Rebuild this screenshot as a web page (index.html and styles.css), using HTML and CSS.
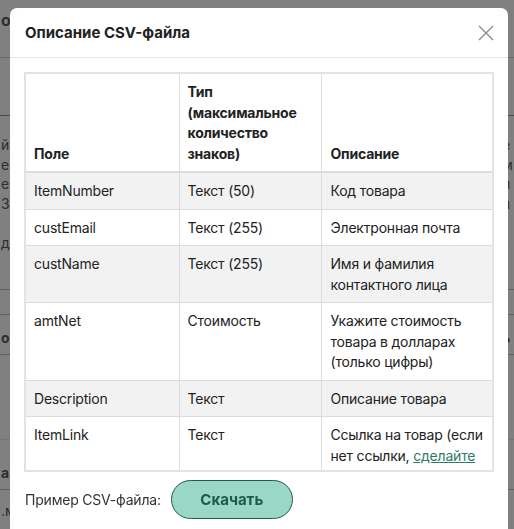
FILE: index.html
```html
<!DOCTYPE html>
<html lang="ru">
<head>
    <meta charset="UTF-8">
    <meta name="viewport" content="width=device-width, initial-scale=1.0">
    <title>Описание CSV-файла</title>
    <link rel="stylesheet" href="styles.css">
</head>
<body>

    <div class="page">
        <div class="page-row r0"><span class="b big">о:</span><span></span></div>
        <div class="page-row r1"><span></span><span></span></div>
        <div class="page-row r2">
            <span>й<br>е<br>ер<br>3)<br><br>да</span>
            <span>е<br>м<br>п<br>л<br><br>г</span>
        </div>
        <div class="page-row r3"><span></span><span></span></div>
        <div class="page-row r4"><span class="b">ор</span><span class="b">ь</span></div>
        <div class="page-row r5"><span></span><span></span></div>
        <div class="page-row r6"><span class="b">а</span><span></span></div>
        <div class="page-row r7"><span>.м</span><span></span></div>
    </div>

    <div class="modal">
        <div class="modal-header">
            <h5 class="modal-title">Описание CSV-файла</h5>
            <button class="close" aria-label="Закрыть">
                <svg width="16" height="16" viewBox="0 0 16 16">
                    <path d="M1 1 L15 15 M15 1 L1 15" stroke="#8a8a8a" stroke-width="1.4" fill="none"/>
                </svg>
            </button>
        </div>

        <div class="modal-body">
            <div class="table-wrap">
                <table class="fields">
                    <colgroup>
                        <col class="c1">
                        <col class="c2">
                        <col class="c3">
                    </colgroup>
                    <thead>
                        <tr>
                            <th>Поле</th>
                            <th>Тип (максимальное количество знаков)</th>
                            <th>Описание</th>
                        </tr>
                    </thead>
                    <tbody>
                        <tr>
                            <td>ItemNumber</td>
                            <td>Текст (50)</td>
                            <td>Код товара</td>
                        </tr>
                        <tr>
                            <td>custEmail</td>
                            <td>Текст (255)</td>
                            <td>Электронная почта</td>
                        </tr>
                        <tr>
                            <td>custName</td>
                            <td>Текст (255)</td>
                            <td>Имя и фамилия контактного лица</td>
                        </tr>
                        <tr>
                            <td>amtNet</td>
                            <td>Стоимость</td>
                            <td>Укажите стоимость товара в долларах (только цифры)</td>
                        </tr>
                        <tr>
                            <td>Description</td>
                            <td>Текст</td>
                            <td>Описание товара</td>
                        </tr>
                        <tr>
                            <td>ItemLink</td>
                            <td>Текст</td>
                            <td>Ссылка на товар (если нет ссылки, <a href="#">сделайте ссылку</a> на главную страницу)</td>
                        </tr>
                    </tbody>
                </table>
            </div>
        </div>

        <div class="modal-footer">
            <span class="sample">Пример CSV-файла:</span>
            <button class="download">Скачать</button>
        </div>
    </div>

</body>
</html>
```

FILE: styles.css
```css
body {
    margin: 0;
    font-family: Inter, "Noto Sans", sans-serif;
    background: #808080;
    overflow: hidden;
    height: 529px;
}

/* page behind the overlay */
.page {
    color: #2e2e2e;
    font-size: 14px;
}

.page-row {
    display: flex;
    justify-content: space-between;
    box-sizing: border-box;
    border-bottom: 1px solid #5e5e5e;
    padding: 0 2px 0 1px;
}

.page-row span:last-child {
    width: 10px;
}

.b {
    font-weight: 700;
}

.big {
    font-size: 16px;
}

.r0 { height: 58px; padding-top: 10px; border-bottom-color: #6c6c6c; }
.r1 { height: 58px; border-bottom-color: #4a4a4a; }
.r2 { height: 174px; padding-top: 19px; line-height: 19.5px; }
.r3 { height: 25px; }
.r4 { height: 40px; padding-top: 14px; }
.r5 { height: 85px; border-bottom-color: #757575; }
.r6 { height: 50px; padding-top: 24px; }
.r7 { height: 39px; padding-top: 12px; border: none; }

/* modal */
.modal {
    position: fixed;
    top: 8px;
    left: 10px;
    width: 498px;
    height: 540px;
    background: #fff;
    border-radius: 7px;
    display: flex;
    flex-direction: column;
    letter-spacing: -0.2px;
}

.modal-header {
    height: 49px;
    display: flex;
    align-items: center;
    justify-content: space-between;
    padding: 0 14px 0 15px;
    border-bottom: 1px solid #e6e6e6;
}

.modal-title {
    margin: 0;
    font-size: 15px;
    font-weight: 700;
    color: #222;
    letter-spacing: 0;
}

.close {
    border: none;
    background: none;
    padding: 0;
    cursor: pointer;
    display: flex;
}

.modal-body {
    padding: 14px 14px 0 14px;
}

.table-wrap {
    height: 400px;
    box-sizing: border-box;
    border: 2px solid #e3e3e3;
    overflow: hidden;
}

.fields {
    width: 100%;
    border-collapse: collapse;
    border-style: hidden;
    table-layout: fixed;
    font-size: 14px;
    line-height: 20.5px;
    color: #222;
}

.c1 { width: 153px; }
.c2 { width: 142px; }

.fields th,
.fields td {
    border: 1px solid #dcdcdc;
    padding: 8px 8px 7px;
    text-align: left;
    vertical-align: top;
}

.fields th {
    font-weight: 700;
    vertical-align: bottom;
    border-bottom-width: 2px;
    padding-top: 8px;
    padding-bottom: 7px;
}

.fields tbody tr:nth-child(odd) {
    background: #f2f2f2;
}

.fields td:last-child,
.fields th:last-child {
    padding-left: 9px;
    padding-right: 3px;
}

.fields a {
    color: #2f7a66;
    text-decoration: underline;
}

.modal-footer {
    display: flex;
    align-items: center;
    gap: 10px;
    padding: 8px 15px;
}

.sample {
    font-size: 14px;
    color: #333;
}

.download {
    width: 122px;
    height: 39px;
    border-radius: 20px;
    border: 1px solid #1f5b4b;
    background: #98d8c5;
    color: #1f5a4a;
    font-family: Inter, "Noto Sans", sans-serif;
    font-size: 15px;
    font-weight: 700;
    cursor: pointer;
}
```
